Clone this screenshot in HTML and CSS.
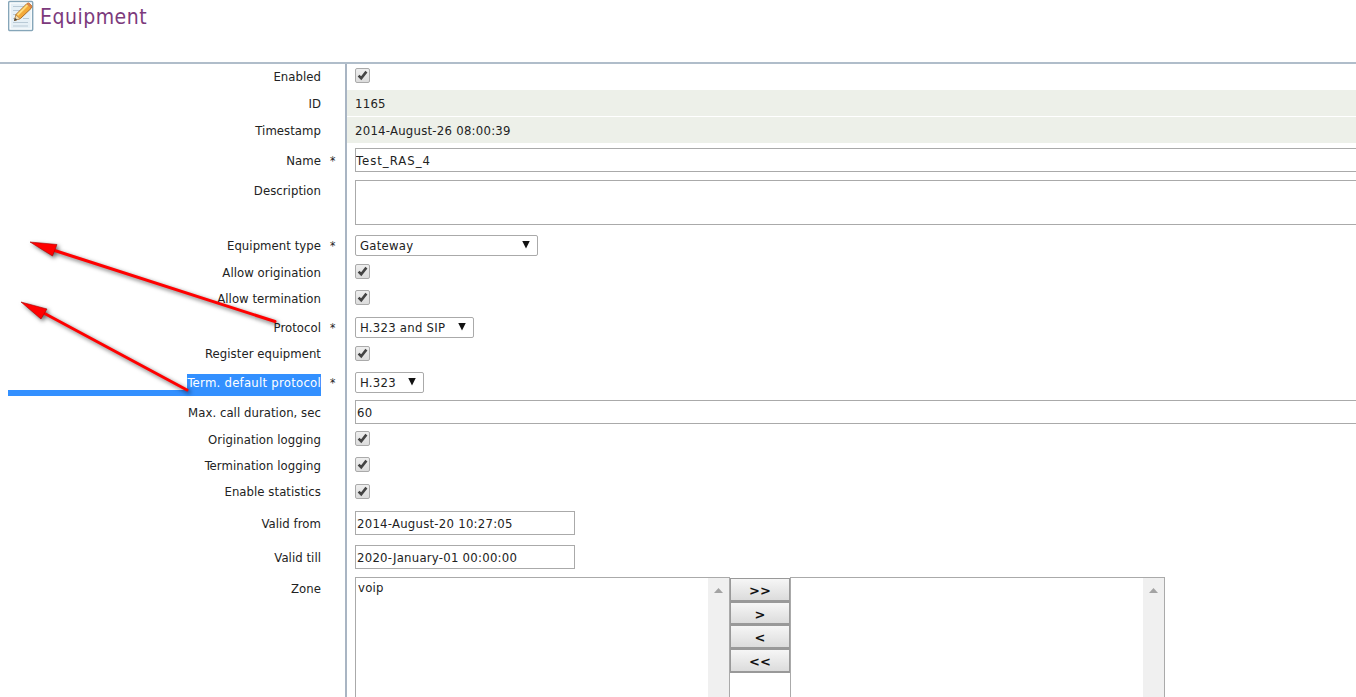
FILE: index.html
```html
<!DOCTYPE html>
<html lang="en">
<head>
    <title>Equipment</title>
    <meta charset="UTF-8" />
    <link rel="stylesheet" href="styles.css">
</head>
<body>
    <svg width="0" height="0" class="defs">
        <symbol id="tick" viewBox="0 0 13 13"><path d="M2.600 6.600 L5.200 9.200 L10.400 2.600" fill="none" stroke="#444" stroke-width="2.600"/></symbol>
    </svg>

    <div class="header">
        <svg class="icon" width="27" height="32" viewBox="0 0 27 32">
            <rect x="0.700" y="1.500" width="24" height="29" rx="1" fill="#e6f0f6" stroke="#86a6b9" stroke-width="1.4"/>
            <rect x="2.200" y="3" width="21" height="26" fill="none" stroke="#fff"/>
            <path d="M5 6.500h11M5 10.500h8M5 14.500h5M5 18.500h3M15 18.500h6M5 22.500h15M5 26h15" stroke="#b9cad6" stroke-width="1.1"/>
            <path d="M6.500 20.500 L8 14.500 L19 3.500 Q20.500 2.500 22 4 L23.500 5.500 Q24.500 7 23 8.500 L12.500 18.500 Z" fill="#f3a938" stroke="#a96a25"/>
            <path d="M9.500 15 L19.500 5" stroke="#ffdc7c" stroke-width="2"/>
            <path d="M18.500 4 L20 2.800 Q21 2.500 22 3.700 L23.700 5.500 Q24.200 7 23 8.300 Z" fill="#d9874f"/>
            <path d="M6.500 20.500 L7.900 15 L12 18.700 Z" fill="#f2dcae" stroke="#a98450" stroke-width=".6"/>
            <path d="M6 21 L7 17.900 L9.300 19.800 Z" fill="#444"/>
        </svg>
        <h1>Equipment</h1>
    </div>

    <div class="form">
        <div class="row h26 flag"><label>Enabled</label><i></i><div class="field"><svg class="check"><use href="#tick"/></svg></div></div>
        <div class="row h27"><label>ID</label><i></i><div class="field readonly">1165</div></div>
        <div class="row h27"><label>Timestamp</label><i></i><div class="field readonly stamp">2014-August-26 08:00:39</div></div>
        <div class="row h32"><label>Name</label><i>*</i><div class="field"><input class="wide name" type="text" value="Test_RAS_4"></div></div>
        <div class="row desc"><label>Description</label><i></i><div class="field"><textarea></textarea></div></div>
        <div class="row h30"><label>Equipment type</label><i>*</i><div class="field"><div class="select type"><span>Gateway</span><b></b></div></div></div>
        <div class="row h26 flag"><label>Allow origination</label><i></i><div class="field"><svg class="check"><use href="#tick"/></svg></div></div>
        <div class="row h26 flag"><label>Allow termination</label><i></i><div class="field"><svg class="check"><use href="#tick"/></svg></div></div>
        <div class="row h30"><label>Protocol</label><i>*</i><div class="field"><div class="select proto"><span>H.323 and SIP</span><b></b></div></div></div>
        <div class="row h25 flag"><label>Register equipment</label><i></i><div class="field"><svg class="check"><use href="#tick"/></svg></div></div>
        <div class="row h30 selected"><label><span>Term. default protocol</span></label><i>*</i><div class="field"><div class="select term"><span>H.323</span><b></b></div></div></div>
        <div class="row h30"><label>Max. call duration, sec</label><i></i><div class="field"><input class="wide" type="text" value="60"></div></div>
        <div class="row h26 flag"><label>Origination logging</label><i></i><div class="field"><svg class="check"><use href="#tick"/></svg></div></div>
        <div class="row h26 flag"><label>Termination logging</label><i></i><div class="field"><svg class="check"><use href="#tick"/></svg></div></div>
        <div class="row h27 flag"><label>Enable statistics</label><i></i><div class="field"><svg class="check"><use href="#tick"/></svg></div></div>
        <div class="row h34"><label>Valid from</label><i></i><div class="field"><input class="date" type="text" value="2014-August-20 10:27:05"></div></div>
        <div class="row h34"><label>Valid till</label><i></i><div class="field"><input class="date" type="text" value="2020-January-01 00:00:00"></div></div>
        <div class="row zone"><label>Zone</label><i></i>
            <div class="field">
                <div class="list"><span>voip</span><div class="scroll"></div></div>
                <div class="moves">
                    <button>&gt;&gt;</button>
                    <button>&gt;</button>
                    <button>&lt;</button>
                    <button>&lt;&lt;</button>
                </div>
                <div class="list"><span></span><div class="scroll"></div></div>
            </div>
        </div>
    </div>

    <!-- annotation arrows -->
    <svg class="arrows" width="345" height="420">
        <g stroke="#f00" stroke-width="3" stroke-linecap="round" fill="#f00">
            <path d="M275 321.500 L50 249"/>
            <path d="M187 390 L40 311"/>
        </g>
        <g fill="#f00" stroke="#a00" stroke-width=".6">
            <path d="M30 242 L57 244.500 L52.500 256 Z"/>
            <path d="M21 302 L47 309 L41 319 Z"/>
        </g>
    </svg>
</body>
</html>
```
FILE: styles.css
```css
body {
    margin: 0;
    height: 697px;
    overflow: hidden;
    background: #fff;
    color: #222;
    font-family: "DejaVu Sans Condensed", "DejaVu Sans", sans-serif;
    font-stretch: condensed;
    font-size: 13px;
    letter-spacing: 0.25px;
}

.defs {
    position: absolute;
}

.header {
    display: flex;
    height: 64px;
    padding-left: 8px;
    border-bottom: 2px solid #b0bdca;
    box-sizing: border-box;
}

.header h1 {
    margin: 4px 0 0 5px;
    font-size: 21px;
    line-height: 26px;
    font-weight: normal;
    letter-spacing: 0.5px;
    color: #7c3a7c;
}

.form {
    height: 633px;
    overflow: hidden;
}

.row {
    display: grid;
    grid-template-columns: 321px 24px 1fr;
    align-items: center;
    position: relative;
}

.row label {
    text-align: right;
    line-height: 16px;
    padding-top: 1px;
    letter-spacing: 0.05px;
}

.row i {
    font-style: normal;
    font-size: 12px;
    padding: 2px 0 0 9px;
    line-height: 16px;
}

.field {
    height: 100%;
    min-width: 0;
    box-sizing: border-box;
    border-left: 2px solid #a9b5c3;
    padding-left: 8px;
    display: flex;
    align-items: center;
}

.h25 { height: 25px; }
.h26 { height: 26px; }
.h27 { height: 27px; }
.h30 { height: 30px; }
.h32 { height: 32px; }
.h34 { height: 34px; }

.flag label {
    padding: 0 0 1px;
}

.readonly {
    background: #edf0e9;
    background-clip: padding-box;
    box-shadow: inset 0 -1px #fff;
}

input, textarea, .select {
    box-sizing: border-box;
    border: 1px solid #aaa;
    font: inherit;
    letter-spacing: inherit;
    color: #222;
    background: #fff;
    outline: none;
}

input {
    height: 24px;
    padding: 1px 1px 0;
    margin: 0;
}

/* no right border, the field runs on past the window */
.wide, textarea {
    width: 100%;
    border-right: none;
}

.name {
    padding-left: 0;
    letter-spacing: 1px;
}

.date {
    width: 220px;
}

.desc {
    height: 54px;
    align-items: start;
}

.desc label {
    padding-top: 7px;
}

.desc .field {
    align-items: flex-start;
    padding-top: 4px;
}

textarea {
    height: 45px;
    margin: 0;
    resize: none;
}

.select {
    height: 21px;
    border-radius: 2px;
    padding: 1px 7px 0 4px;
    display: flex;
    align-items: center;
    justify-content: space-between;
}

.select b {
    width: 8px;
    height: 8px;
    margin-bottom: 2px;
    background: #111;
    clip-path: polygon(0 0, 100% 0, 50% 100%);
}

.type { width: 183px; }
.proto { width: 119px; }
.term { width: 69px; }

.check {
    width: 15px;
    height: 15px;
    box-sizing: border-box;
    margin-bottom: 3px;
    border: 1px solid #aaa;
    border-radius: 2px;
    background: linear-gradient(#eee, #dcdcdc);
}

.selected label {
    letter-spacing: 0.25px;
}

.selected label span {
    display: inline-block;
    background: #3390ff;
    color: #fff;
    line-height: 17px;
}

.selected::after {
    content: "";
    position: absolute;
    left: 8px;
    top: 23px;
    width: 313px;
    height: 6px;
    background: #3390ff;
}

.zone {
    height: 123px;
    align-items: start;
}

.zone label {
    padding-top: 7px;
}

.zone .field {
    align-items: stretch;
    padding-top: 3px;
}

/* the lists are cut off by the bottom of the window */
.list {
    width: 375px;
    box-sizing: border-box;
    border: 1px solid #aaa;
    border-bottom: none;
    display: flex;
    justify-content: space-between;
}

.list span {
    padding: 2px 0 0 2px;
}

.scroll {
    width: 21px;
    background: #f0f0f0;
}

.scroll::before {
    content: "";
    display: block;
    width: 9px;
    height: 5px;
    margin: 10px 0 0 6px;
    background: #a3a3a3;
    clip-path: polygon(50% 0, 100% 100%, 0 100%);
}

.moves {
    width: 60px;
    display: flex;
    flex-direction: column;
    padding-top: 1px;
}

.moves button {
    height: 23.7px;
    padding: 2px 0 0;
    border: 1px solid #999;
    border-bottom-width: 2px;
    background: linear-gradient(#f6f6f6, #dcdcdc);
    font: bold 13px "DejaVu Sans", sans-serif;
    color: #111;
}

.arrows {
    position: absolute;
    left: 0;
    top: 0;
    filter: drop-shadow(2px 2px 2px rgba(0, 0, 0, 0.6));
}
```
